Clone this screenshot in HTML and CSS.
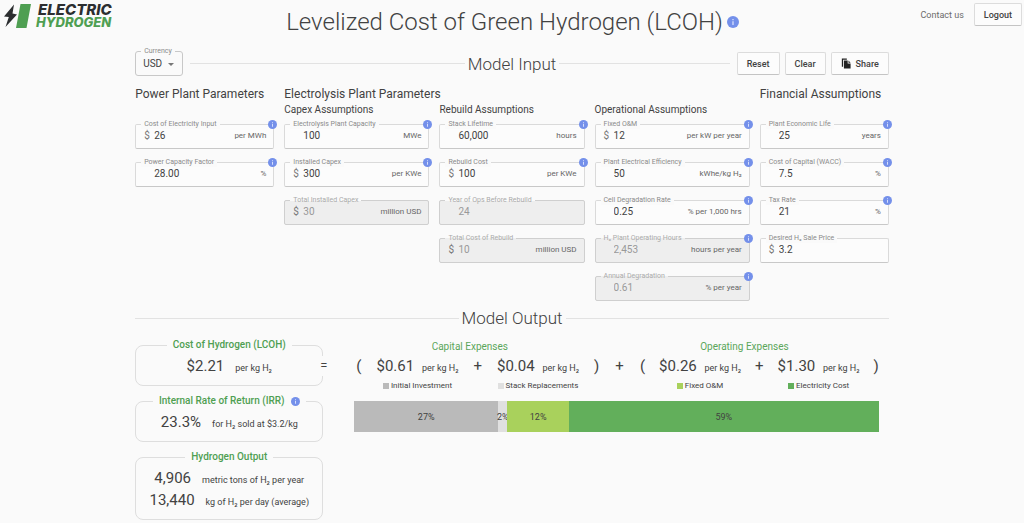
FILE: index.html
```html
<!DOCTYPE html>
<html lang="en">
<head>
<meta charset="utf-8">
<title>Levelized Cost of Green Hydrogen (LCOH)</title>
<link rel="stylesheet" href="styles.css">
</head>
<body>
<svg class="defs" aria-hidden="true">
  <symbol id="info" viewBox="0 0 24 24"><circle cx="12" cy="12" r="12" fill="#7490ea"/><path d="M10.8 10.5h2.4V18h-2.4zM10.8 6h2.4v2.5h-2.4z" fill="#dfe6ff"/></symbol>
</svg>
<header class="top">
  <a class="logo" href="#" aria-label="Electric Hydrogen">
    <svg class="logo-mark" viewBox="0 0 28 26" aria-hidden="true">
      <path d="M11 1.500 1 13.500 5.800 14 2.500 24 14 11.500 9.500 10.500z" fill="#2c2e30"/>
      <path d="M17.500 1H28L23.500 25H13z" fill="#4f9f52"/>
    </svg>
    <span class="logo-text"><span class="logo-dark">ELECTRIC</span><span class="logo-green">HYDROGEN</span></span>
  </a>
  <div class="title">
    <h1>Levelized Cost of Green Hydrogen (LCOH)</h1>
    <button class="info info-large" aria-label="About LCOH"><svg><use href="#info"/></svg></button>
  </div>
  <nav class="account">
    <a href="#">Contact us</a>
    <button class="btn">Logout</button>
  </nav>
</header>

<main>
  <div class="toolbar">
    <div class="side">
      <div class="currency">
        <label for="currency">Currency</label>
        <select id="currency"><option>USD</option></select>
        <svg class="arrow" viewBox="0 0 8 4" aria-hidden="true"><path d="M0 0h8L4 4z" fill="#777"/></svg>
      </div>
      <span class="line"></span>
    </div>
    <h2>Model Input</h2>
    <div class="side">
      <span class="line"></span>
      <div class="actions">
        <button class="btn">Reset</button>
        <button class="btn">Clear</button>
        <button class="btn"><svg class="copy" viewBox="0 0 12 12" aria-hidden="true"><path d="M1 0h6v1.500H2.500V10H1zM3.500 2.500H8V6h3.500v6h-8zM9 2.500 11.500 5H9z" fill="#222"/></svg>Share</button>
      </div>
    </div>
  </div>

  <form class="inputs">
    <section class="group">
      <h3>Power Plant Parameters</h3>
      <div class="fields">
        <div class="field"><label for="f1">Cost of Electricity Input</label><span class="prefix">$</span><input id="f1" value="26"><span class="unit">per MWh</span><button type="button" class="info" aria-label="Info"><svg><use href="#info"/></svg></button></div>
        <div class="field"><label for="f2">Power Capacity Factor</label><span class="prefix"></span><input id="f2" value="28.00"><span class="unit">%</span><button type="button" class="info" aria-label="Info"><svg><use href="#info"/></svg></button></div>
      </div>
    </section>
    <section class="group electrolysis">
      <h3>Electrolysis Plant Parameters</h3>
      <div class="column">
        <h4>Capex Assumptions</h4>
        <div class="fields">
          <div class="field"><label for="f3">Electrolysis Plant Capacity</label><span class="prefix"></span><input id="f3" value="100"><span class="unit">MWe</span><button type="button" class="info" aria-label="Info"><svg><use href="#info"/></svg></button></div>
          <div class="field"><label for="f4">Installed Capex</label><span class="prefix">$</span><input id="f4" value="300"><span class="unit">per KWe</span><button type="button" class="info" aria-label="Info"><svg><use href="#info"/></svg></button></div>
          <div class="field computed"><label for="f5">Total Installed Capex</label><span class="prefix">$</span><input id="f5" value="30" disabled><span class="unit">million USD</span></div>
        </div>
      </div>
      <div class="column">
        <h4>Rebuild Assumptions</h4>
        <div class="fields">
          <div class="field"><label for="f6">Stack Lifetime</label><span class="prefix"></span><input id="f6" value="60,000"><span class="unit">hours</span><button type="button" class="info" aria-label="Info"><svg><use href="#info"/></svg></button></div>
          <div class="field"><label for="f7">Rebuild Cost</label><span class="prefix">$</span><input id="f7" value="100"><span class="unit">per KWe</span><button type="button" class="info" aria-label="Info"><svg><use href="#info"/></svg></button></div>
          <div class="field computed"><label for="f8">Year of Ops Before Rebuild</label><span class="prefix"></span><input id="f8" value="24" disabled></div>
          <div class="field computed"><label for="f9">Total Cost of Rebuild</label><span class="prefix">$</span><input id="f9" value="10" disabled><span class="unit">million USD</span></div>
        </div>
      </div>
      <div class="column">
        <h4>Operational Assumptions</h4>
        <div class="fields">
          <div class="field"><label for="f10">Fixed O&amp;M</label><span class="prefix">$</span><input id="f10" value="12"><span class="unit">per kW per year</span><button type="button" class="info" aria-label="Info"><svg><use href="#info"/></svg></button></div>
          <div class="field"><label for="f11">Plant Electrical Efficiency</label><span class="prefix"></span><input id="f11" value="50"><span class="unit">kWhe/kg H₂</span><button type="button" class="info" aria-label="Info"><svg><use href="#info"/></svg></button></div>
          <div class="field"><label for="f12">Cell Degradation Rate</label><span class="prefix"></span><input id="f12" value="0.25"><span class="unit">% per 1,000 hrs</span><button type="button" class="info" aria-label="Info"><svg><use href="#info"/></svg></button></div>
          <div class="field computed"><label for="f13">H₂ Plant Operating Hours</label><span class="prefix"></span><input id="f13" value="2,453" disabled><span class="unit">hours per year</span><button type="button" class="info" aria-label="Info"><svg><use href="#info"/></svg></button></div>
          <div class="field computed"><label for="f14">Annual Degradation</label><span class="prefix"></span><input id="f14" value="0.61" disabled><span class="unit">% per year</span><button type="button" class="info" aria-label="Info"><svg><use href="#info"/></svg></button></div>
        </div>
      </div>
    </section>
    <section class="group">
      <h3>Financial Assumptions</h3>
      <div class="fields">
        <div class="field"><label for="f15">Plant Economic Life</label><span class="prefix"></span><input id="f15" value="25"><span class="unit">years</span><button type="button" class="info" aria-label="Info"><svg><use href="#info"/></svg></button></div>
        <div class="field"><label for="f16">Cost of Capital (WACC)</label><span class="prefix"></span><input id="f16" value="7.5"><span class="unit">%</span><button type="button" class="info" aria-label="Info"><svg><use href="#info"/></svg></button></div>
        <div class="field"><label for="f17">Tax Rate</label><span class="prefix"></span><input id="f17" value="21"><span class="unit">%</span><button type="button" class="info" aria-label="Info"><svg><use href="#info"/></svg></button></div>
        <div class="field"><label for="f18">Desired H₂ Sale Price</label><span class="prefix">$</span><input id="f18" value="3.2"></div>
      </div>
    </section>
  </form>

  <div class="side divider">
    <span class="line"></span>
    <h2>Model Output</h2>
    <span class="line"></span>
  </div>

  <div class="outputs">
    <div class="cards">
      <section class="card">
        <h3>Cost of Hydrogen (LCOH)</h3>
        <p><strong>$2.21</strong><span>per kg H₂</span></p>
        <span class="equals">=</span>
      </section>
      <section class="card">
        <h3>Internal Rate of Return (IRR) <button class="info" aria-label="About IRR"><svg><use href="#info"/></svg></button></h3>
        <p><strong>23.3%</strong><span>for H₂ sold at $3.2/kg</span></p>
      </section>
      <section class="card">
        <h3>Hydrogen Output</h3>
        <p><strong>4,906</strong><span>metric tons of H₂ per year</span></p>
        <p><strong>13,440</strong><span>kg of H₂ per day (average)</span></p>
      </section>
    </div>
    <div class="breakdown">
      <div class="equation">
        <section class="expenses capital">
          <h3>Capital Expenses</h3>
          <div class="terms">
            <span class="op">(</span>
            <div class="term"><p><strong>$0.61</strong><span>per kg H₂</span></p><small><i class="key initial"></i>Initial Investment</small></div>
            <span class="op">+</span>
            <div class="term"><p><strong>$0.04</strong><span>per kg H₂</span></p><small><i class="key stack"></i>Stack Replacements</small></div>
            <span class="op">)</span>
          </div>
        </section>
        <span class="op">+</span>
        <section class="expenses operating">
          <h3>Operating Expenses</h3>
          <div class="terms">
            <span class="op">(</span>
            <div class="term"><p><strong>$0.26</strong><span>per kg H₂</span></p><small><i class="key fixed"></i>Fixed O&amp;M</small></div>
            <span class="op">+</span>
            <div class="term"><p><strong>$1.30</strong><span>per kg H₂</span></p><small><i class="key electricity"></i>Electricity Cost</small></div>
            <span class="op">)</span>
          </div>
        </section>
      </div>
      <div class="bar">
        <span class="initial" style="width:27.4%">27%</span>
        <span class="stack" style="width:1.8%">2%</span>
        <span class="fixed" style="width:11.7%">12%</span>
        <span class="electricity" style="width:59.1%">59%</span>
      </div>
    </div>
  </div>
</main>
</body>
</html>
```

FILE: styles.css
```css
* { box-sizing: border-box; }

body {
  margin: 0;
  background: #fafafa;
  color: #424242;
  font-family: Roboto, "Liberation Sans", sans-serif;
  font-size: 9px;
}

h1, h2, h3, h4, p { margin: 0; font-weight: 400; }
button, input, select { font: inherit; color: inherit; }
.defs { position: absolute; width: 0; height: 0; }

.top {
  display: grid;
  grid-template-columns: 1fr auto 1fr;
  align-items: start;
  padding: 3px 2px 0 3px;
}

.logo { display: flex; gap: 5px; text-decoration: none; }
.logo-mark { width: 28px; height: 26px; }
.logo-text {
  display: flex;
  flex-direction: column;
  font: italic 800 13px/12px Inter, sans-serif;
  padding-top: 1px;
}
.logo-dark { padding-left: 2px; color: #2c2e30; font-size: 15px; }
.logo-green { color: #4f9f52; }

.title { display: flex; align-items: center; gap: 4px; padding-top: 4px; }
h1 { font-size: 24px; line-height: 30px; font-weight: 300; white-space: nowrap; }

.account { display: flex; justify-content: flex-end; align-items: center; gap: 10px; }
.account a { color: #6a6a6a; text-decoration: none; }

.btn {
  display: flex;
  align-items: center;
  gap: 5px;
  height: 23px;
  padding: 0 9px;
  border: 1px solid #dcdcdc;
  border-bottom-color: #c4c4c4;
  border-radius: 2px;
  background: #fcfcfc;
  font-weight: 500;
}
.copy { width: 10px; height: 11px; }

.info {
  display: block;
  width: 9px;
  height: 9px;
  padding: 0;
  border: 0;
  border-radius: 50%;
  background: none;
}
.info svg { display: block; width: 100%; height: 100%; }
.info-large { width: 12px; height: 12px; }

main { width: 73.6%; margin: 0 auto; }

.toolbar {
  display: grid;
  grid-template-columns: 1fr auto 1fr;
  align-items: center;
  gap: 3px;
  padding-top: 14px;
}
.side { display: flex; align-items: center; gap: 7px; }
.divider { gap: 3px; }
.line { flex: 1; height: 1px; background: #e2e2e2; }
.actions { display: flex; gap: 5px; }
h2 { font-size: 17px; line-height: 22px; font-weight: 300; white-space: nowrap; }

.currency {
  position: relative;
  display: flex;
  align-items: center;
  width: 48px;
  height: 25px;
  border: 1px solid #c8c8c8;
  border-radius: 3px;
}
.currency select {
  appearance: none;
  width: 100%;
  padding: 0 0 0 7px;
  border: 0;
  background: none;
  font-size: 10px;
}
.arrow { position: absolute; right: 8px; top: 11px; width: 6px; height: 3px; }

.currency label, .field label {
  position: absolute;
  top: -5px;
  left: 5px;
  padding: 0 3px;
  background: #fafafa;
  color: #8a8a8a;
  font-size: 7px;
  line-height: 9px;
  white-space: nowrap;
}

.inputs {
  display: grid;
  grid-template-columns: minmax(0, 139fr) minmax(0, 145fr) minmax(0, 145fr) minmax(0, 155fr) minmax(0, 129fr);
  column-gap: 10px;
  padding: 9px 0 6px;
}
.group { display: grid; grid-template-rows: 18px 14px auto; grid-template-columns: minmax(0, 1fr); align-content: start; }
.group > .fields { grid-row: 3; }
.electrolysis { grid-column: 2 / 5; grid-template-columns: subgrid; grid-template-rows: 18px auto; }
.electrolysis h3 { grid-column: 1 / -1; }
.group h3 { font-size: 12px; line-height: 18px; white-space: nowrap; }
.group h4 { font-size: 10px; line-height: 14px; white-space: nowrap; }

.fields { display: flex; flex-direction: column; gap: 13px; padding-top: 7px; }
.field {
  position: relative;
  display: flex;
  align-items: center;
  height: 25px;
  padding: 0 7px 2px 8px;
  border: 1px solid #dadada;
  border-bottom-color: #c8c8c8;
  border-radius: 2px;
  background: #fcfcfc;
}
.field input {
  flex: 1;
  min-width: 0;
  padding: 0;
  border: 0;
  background: none;
  font-size: 10px;
}
.prefix { width: 10px; font-size: 10px; color: #777; }
.unit { font-size: 8px; color: #666; white-space: nowrap; }
.field .info { position: absolute; top: -5px; right: -4px; }
.computed { background: #eee; border-color: #cfcfcf; }
.computed input { color: #999; }
.computed label { background: linear-gradient(#fafafa 50%, #eee 50%); color: #aaa; }

.outputs {
  display: grid;
  grid-template-columns: 188fr 524fr;
  column-gap: 31px;
  padding: 10px 10px 2px 0;
}
.cards { display: flex; flex-direction: column; gap: 15px; padding-top: 6px; }
.card {
  position: relative;
  padding: 0 10px 8px;
  border: 1px solid #dedede;
  border-radius: 8px;
}
.card h3 {
  display: flex;
  align-items: center;
  gap: 6px;
  width: fit-content;
  margin: -7px auto 4px;
  padding: 0 6px;
  background: #fafafa;
  color: #4f9f52;
  font-size: 10px;
  line-height: 12px;
  font-weight: 500;
}
p {
  display: flex;
  align-items: baseline;
  justify-content: center;
  gap: 11px;
  height: 22px;
  line-height: 22px;
  white-space: nowrap;
}
p strong { font-size: 15px; font-weight: 400; }
.equals {
  position: absolute;
  top: 10px;
  right: -5px;
  background: #fafafa;
  font-size: 13px;
  line-height: 20px;
}

.equation { display: flex; justify-content: space-between; padding: 0 0 0 2px; }
.equation > .op { padding-top: 16px; }
.op { font-size: 15px; line-height: 22px; }
.expenses h3 { text-align: center; color: #5aa65a; font-size: 10px; line-height: 16px; }
.capital h3 { padding-right: 16px; }
.operating h3 { padding-right: 30px; }
.terms { display: flex; gap: 15px; }
.operating .terms { gap: 14px; }
.term { width: 82px; }
.term p { justify-content: space-between; gap: 0; }
.term small {
  display: flex;
  align-items: center;
  justify-content: center;
  gap: 2px;
  padding-top: 3px;
  font-size: 8px;
  line-height: 12px;
  white-space: nowrap;
}
.key { width: 6px; height: 6px; }
.initial { background: #bababa; }
.stack { background: #e0e0e0; }
.fixed { background: #a9d15c; }
.electricity { background: #62af5b; }

.bar { display: flex; height: 31px; margin-top: 9px; font-size: 9px; }
.bar span { display: flex; align-items: center; justify-content: center; }
```
